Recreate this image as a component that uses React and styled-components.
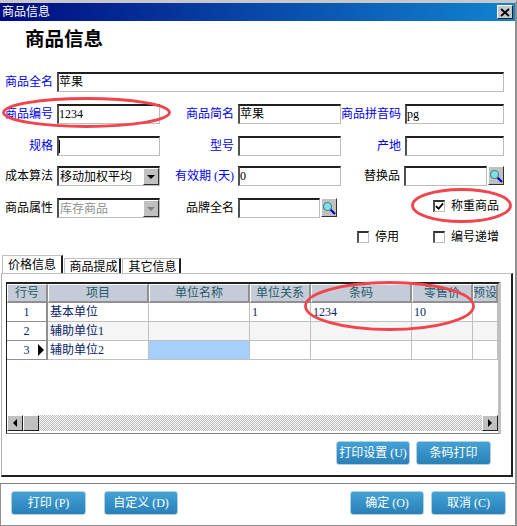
import React from 'react';
import styled, { createGlobalStyle } from 'styled-components';

const FONT = '"Liberation Serif", "Noto Sans CJK SC", serif';

const GlobalStyle = createGlobalStyle`
    html, body {
        margin: 0;
        padding: 0;
        background: #fff;
    }
    * {
        box-sizing: border-box;
    }
`;

const Window = styled.div`
    position: relative;
    width: 517px;
    height: 526px;
    overflow: hidden;
    background: #fff;
    border-top: 3px solid #c8c8c8;
    border-right: 2px solid #909090;
    border-bottom: 1px solid #909090;
    font: 12px/1 ${FONT};
    color: #000;
`;

const TitleBar = styled.div`
    display: flex;
    align-items: center;
    justify-content: space-between;
    height: 18px;
    padding: 0 2px 0 2px;
    background: linear-gradient(90deg, #000c80, #1084d0);
    color: #fff;
`;

const CloseButton = styled.div`
    display: flex;
    align-items: center;
    justify-content: center;
    width: 16px;
    height: 14px;
    background: #c8c8c8;
    border: 1px solid;
    border-color: #fff #202020 #202020 #fff;
`;

const Heading = styled.div`
    height: 51px;
    padding: 8px 0 0 25px;
    font-size: 19.5px;
    font-weight: 700;
    line-height: 22px;
`;

const FormRow = styled.div`
    display: grid;
    grid-template-columns: 53px 107px 74px 107px 60px 103px;
    height: 20px;
    margin-top: ${p => p.$mt || 0}px;
    align-items: stretch;
`;

const Label = styled.label`
    display: flex;
    align-items: center;
    justify-content: flex-end;
    padding-right: ${p => p.$pr || 0}px;
    color: ${p => (p.$link ? '#0000f0' : '#000')};
    white-space: nowrap;
`;

const Input = styled.div`
    display: flex;
    align-items: center;
    grid-column: ${p => p.$span || 'auto'};
    min-width: 0;
    flex: 1;
    margin-left: ${p => p.$ml || 4}px;
    padding: 0 2px 1px 0;
    border-style: solid;
    border-width: 2px 1px 1px 2px;
    border-color: #202020 #bcbcbc #bcbcbc #505050;
    background: #fff;
    white-space: nowrap;
`;

const Caret = styled.span`
    width: 1px;
    height: 13px;
    background: #000;
`;

const SelectBox = styled(Input)`
    justify-content: space-between;
    padding: 0 0 0 1px;
    color: ${p => (p.$disabled ? '#909090' : '#000')};
`;

const SelectArrow = styled.span`
    display: flex;
    align-items: center;
    justify-content: center;
    width: 16px;
    height: 100%;
    background: #c0c0c0;
    border: 1px solid;
    border-color: #fff #303030 #303030 #fff;
    &::after {
        content: '';
        border-style: solid;
        border-width: 4px 4px 0;
        border-color: ${p => (p.$disabled ? '#808080' : '#000')} transparent transparent;
    }
`;

const Lookup = styled.div`
    display: flex;
    padding-right: ${p => p.$pr || 0}px;
`;

const SearchBtn = styled.span`
    display: flex;
    align-items: center;
    justify-content: center;
    flex: none;
    width: 16px;
    height: 19px;
    margin-left: 1px;
    background: #c0c0c0;
    border: 1px solid;
    border-color: #fff #303030 #303030 #fff;
`;

const CheckRow = styled.div`
    display: flex;
    justify-content: flex-end;
    align-items: center;
    height: 14px;
    margin-top: 12px;
    padding-right: 16px;
`;

const Check = styled.span`
    display: inline-flex;
    align-items: center;
    gap: 6px;
    margin-left: ${p => p.$ml || 0}px;
    white-space: nowrap;
`;

const WeighCheck = styled(Check)`
    grid-column: 5 / span 2;
    justify-self: end;
    align-self: start;
    margin: 2px 5px 0 0;
`;

const CheckBox = styled.span`
    display: flex;
    align-items: center;
    justify-content: center;
    width: 12px;
    height: 12px;
    background: #fff;
    border-style: solid;
    border-width: 2px 1px 1px 2px;
    border-color: #303030 #bcbcbc #bcbcbc #505050;
`;

const Tabs = styled.div`
    display: flex;
    align-items: flex-end;
    height: 18px;
    margin-top: 11px;
    padding-left: 2px;
`;

const Tab = styled.div`
    display: flex;
    align-items: center;
    justify-content: center;
    width: ${p => p.$w}px;
    height: ${p => (p.$active ? 18 : 15)}px;
    margin-right: 1px;
    padding: ${p => (p.$active ? '0' : '1px 0 0 3px')};
    background: #fff;
    border-style: solid;
    border-width: 1px 2px 0 1px;
    border-color: #c0c0c0 #202020 #c0c0c0 #c0c0c0;
`;

const Panel = styled.div`
    display: flex;
    flex-direction: column;
    height: 204px;
    margin: 0 2px 0 1px;
    padding: 8px 0 0 4px;
    border-style: solid;
    border-width: 1px 2px 2px 1px;
    border-color: #c0c0c0 #202020 #202020 #b0b0b0;
`;

const GridFrame = styled.div`
    display: flex;
    flex-direction: column;
    width: 494px;
    height: 152px;
    border-style: solid;
    border-width: 2px 2px 1px 1px;
    border-color: #202020 #c0c0c0 #808080 #202020;
    box-shadow: 1px 0 0 #c0c0c0;
`;

const GridBody = styled.div`
    flex: 1;
    display: grid;
    grid-template-columns: 41px 101px 101px 61px 101px 61px 25px;
    grid-auto-rows: 19px;
    align-content: start;
    overflow: hidden;
`;

const HeadCell = styled.div`
    display: flex;
    align-items: center;
    justify-content: center;
    overflow: hidden;
    white-space: nowrap;
    background: #c5ccd8;
    color: #245a68;
    border-style: solid;
    border-width: 1px 2px 2px 1px;
    border-color: #fff #909090 #909090 #fff;
`;

const NumCell = styled.div`
    display: flex;
    align-items: center;
    justify-content: center;
    position: relative;
    color: #0a246a;
    background: #fff;
    border-style: solid;
    border-width: 0 2px 1px 0;
    border-color: #909090;
`;

const RowPointer = styled.span`
    position: absolute;
    right: 2px;
    top: 3px;
    border-style: solid;
    border-width: 6px 0 6px 6px;
    border-color: transparent transparent transparent #000;
`;

const Cell = styled.div`
    display: flex;
    align-items: center;
    padding-left: 2px;
    color: #0a246a;
    background: ${p => p.$bg || '#fff'};
    border-style: solid;
    border-width: 0 1px 1px 0;
    border-color: #c0c0c0;
    white-space: nowrap;
    overflow: hidden;
`;

const ScrollBar = styled.div`
    display: flex;
    height: 16px;
    margin-bottom: 2px;
    background: repeating-conic-gradient(#b8b8b8 0 25%, #fff 0 50%) 0 0 / 2px 2px;
`;

const ScrollBtn = styled.span`
    display: flex;
    align-items: center;
    justify-content: center;
    width: 16px;
    flex: none;
    margin-left: ${p => (p.$end ? 'auto' : 0)};
    background: #c0c0c0;
    border: 1px solid;
    border-color: #fff #202020 #202020 #fff;
`;

const ArrowLeft = styled.span`
    border-style: solid;
    border-width: 4px 4px 4px 0;
    border-color: transparent #000 transparent transparent;
`;

const ArrowRight = styled.span`
    border-style: solid;
    border-width: 4px 0 4px 4px;
    border-color: transparent transparent transparent #000;
`;

const PanelActions = styled.div`
    display: flex;
    gap: 6px;
    margin-top: 7px;
    padding-left: 330px;
`;

const Button = styled.div`
    display: flex;
    align-items: center;
    justify-content: center;
    width: ${p => p.$w || 75}px;
    height: 24px;
    color: #fff;
    white-space: pre;
    background: linear-gradient(#42a2d6, #2a80b6);
    border: 1px solid #b4cfe2;
    border-radius: 3px;
`;

const Footer = styled.div`
    display: flex;
    align-items: center;
    justify-content: space-between;
    height: 42px;
    margin-top: 6px;
    padding: 0 9px 3px 10px;
    border-top: 1px solid #808080;
    border-left: 1px solid #909090;
`;

const ButtonGroup = styled.div`
    display: flex;
    gap: ${p => p.$gap}px;
`;

const Annotations = styled.svg`
    position: absolute;
    left: 0;
    top: -3px;
    width: 517px;
    height: 526px;
    pointer-events: none;
`;

const SearchIcon = () => (
    <svg width="14" height="14" viewBox="0 0 14 14">
        <line x1="8" y1="8" x2="13" y2="13" stroke="#0000b0" strokeWidth="2.2" />
        <circle cx="5.5" cy="5.5" r="4" fill="#7fe0e8" stroke="#4a8a90" strokeWidth="1.2" />
    </svg>
);

const Search = () => (
    <SearchBtn>
        <SearchIcon />
    </SearchBtn>
);

const headers = ['行号', '项目', '单位名称', '单位关系', '条码', '零售价', '预设'];

const rows = [
    { no: 1, item: '基本单位', rel: '1', code: '1234', price: '10' },
    { no: 2, item: '辅助单位1', rel: '', code: '', price: '', bg: '#f5f5f5' },
    { no: 3, item: '辅助单位2', rel: '', code: '', price: '', current: true },
];

export default function App() {
    return (
        <Window>
            <GlobalStyle />
            <TitleBar>
                <span>商品信息</span>
                <CloseButton>
                    <svg width="10" height="9" viewBox="0 0 10 9">
                        <path d="M1 1 L9 8 M9 1 L1 8" stroke="#000" strokeWidth="1.8" />
                    </svg>
                </CloseButton>
            </TitleBar>
            <Heading>商品信息</Heading>

            <FormRow>
                <Label $link>商品全名</Label>
                <Input $span="2 / span 5">苹果</Input>
            </FormRow>
            <FormRow $mt={12}>
                <Label $link>商品编号</Label>
                <Input>1234</Input>
                <Label $link>商品简名</Label>
                <Input>苹果</Input>
                <Label $link>商品拼音码</Label>
                <Input>pg</Input>
            </FormRow>
            <FormRow $mt={12}>
                <Label $link>规格</Label>
                <Input><Caret /></Input>
                <Label $link>型号</Label>
                <Input />
                <Label $link>产地</Label>
                <Input />
            </FormRow>
            <FormRow $mt={10}>
                <Label>成本算法</Label>
                <SelectBox>移动加权平均<SelectArrow /></SelectBox>
                <Label $link>有效期 (天)</Label>
                <Input>0</Input>
                <Label $pr={1}>替换品</Label>
                <Lookup>
                    <Input $ml={3} />
                    <Search />
                </Lookup>
            </FormRow>
            <FormRow $mt={12}>
                <Label>商品属性</Label>
                <SelectBox $disabled>库存商品<SelectArrow $disabled /></SelectBox>
                <Label>品牌全名</Label>
                <Lookup $pr={4}>
                    <Input />
                    <Search />
                </Lookup>
                <WeighCheck>
                    <CheckBox>
                        <svg width="10" height="9" viewBox="0 0 10 9">
                            <path d="M1 4 L4 7 L9 1" fill="none" stroke="#000" strokeWidth="2" />
                        </svg>
                    </CheckBox>
                    称重商品
                </WeighCheck>
            </FormRow>
            <CheckRow>
                <Check><CheckBox />停用</Check>
                <Check $ml={34}><CheckBox />编号递增</Check>
            </CheckRow>

            <Tabs>
                <Tab $active $w={61}>价格信息</Tab>
                <Tab $w={57}>商品提成</Tab>
                <Tab $w={59}>其它信息</Tab>
            </Tabs>
            <Panel>
                <GridFrame>
                    <GridBody>
                        {headers.map(h => <HeadCell key={h}>{h}</HeadCell>)}
                        {rows.map(r => (
                            <React.Fragment key={r.no}>
                                <NumCell>
                                    {r.no}
                                    {r.current && <RowPointer />}
                                </NumCell>
                                <Cell $bg={r.bg}>{r.item}</Cell>
                                <Cell $bg={r.current ? '#a6d0fb' : r.bg} />
                                <Cell $bg={r.bg}>{r.rel}</Cell>
                                <Cell $bg={r.bg}>{r.code}</Cell>
                                <Cell $bg={r.bg}>{r.price}</Cell>
                                <Cell $bg={r.bg} />
                            </React.Fragment>
                        ))}
                    </GridBody>
                    <ScrollBar>
                        <ScrollBtn><ArrowLeft /></ScrollBtn>
                        <ScrollBtn />
                        <ScrollBtn $end><ArrowRight /></ScrollBtn>
                    </ScrollBar>
                </GridFrame>
                <PanelActions>
                    <Button $w={74}>打印设置 (U)</Button>
                    <Button $w={75}>条码打印</Button>
                </PanelActions>
            </Panel>

            <Footer>
                <ButtonGroup $gap={18}>
                    <Button>打印 (P)</Button>
                    <Button $w={74}>自定义 (D)</Button>
                </ButtonGroup>
                <ButtonGroup $gap={7}>
                    <Button $w={74}>确定 (O)</Button>
                    <Button>取消 (C)</Button>
                </ButtonGroup>
            </Footer>

            <Annotations viewBox="0 0 517 526">
                <g fill="none" stroke="#f2444c" strokeWidth="2.8">
                    <ellipse cx="86.5" cy="112.5" rx="83" ry="14" />
                    <ellipse cx="461.5" cy="205.5" rx="49" ry="16" />
                    <ellipse cx="389.5" cy="306" rx="84" ry="23.5" />
                </g>
            </Annotations>
        </Window>
    );
}
